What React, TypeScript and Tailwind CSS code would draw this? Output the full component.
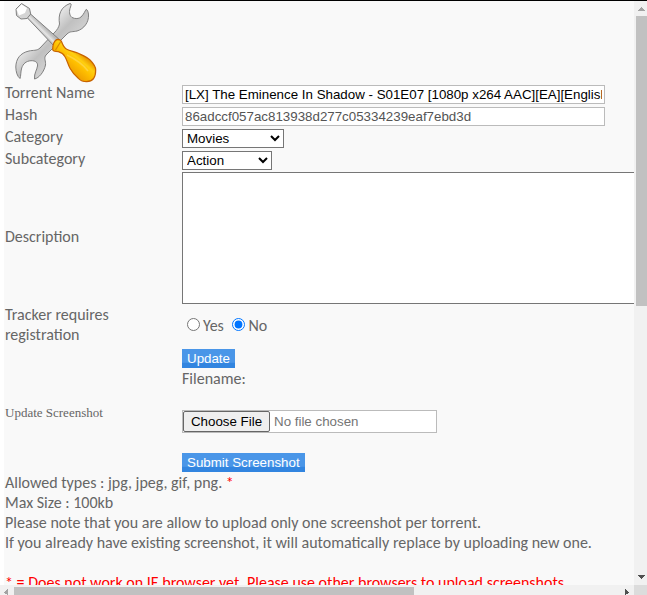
import type { ReactNode } from "react";

const control = "box-border border text-[13.333px] font-['Liberation_Sans',sans-serif] leading-[15px]";
const field = `${control} block h-[19px] w-[423px] rounded-none border-[#bbb] bg-white px-0.5 py-px`;
const select = `${control} block h-[19px] rounded-none border-[#767676] bg-white text-black`;
const button =
  "block h-[19px] bg-linear-to-b from-[#4a96e8] from-70% to-[#3285e0] to-75% px-[5px] font-['Liberation_Sans',sans-serif] text-[13.333px] leading-[19px] whitespace-nowrap text-white";

function Tools() {
  return (
    <svg width="82" height="82" viewBox="0 0 82 82" className="block">
      <defs>
        <linearGradient id="steel" x1="0" y1="0" x2="1" y2="1">
          <stop offset="0" stopColor="#fff" />
          <stop offset="0.35" stopColor="#e8e8e8" />
          <stop offset="0.5" stopColor="#c0c0c0" />
          <stop offset="0.7" stopColor="#d8d8d8" />
          <stop offset="1" stopColor="#eee" />
        </linearGradient>
        <linearGradient id="shaft" x1="24" y1="30" x2="29" y2="25" gradientUnits="userSpaceOnUse">
          <stop offset="0" stopColor="#b0b0b0" />
          <stop offset="0.5" stopColor="#e4e4e4" />
          <stop offset="1" stopColor="#bbb" />
        </linearGradient>
        <linearGradient id="handle" x1="54" y1="68" x2="67" y2="53" gradientUnits="userSpaceOnUse">
          <stop offset="0" stopColor="#f0a000" />
          <stop offset="0.5" stopColor="#ffc000" />
          <stop offset="0.75" stopColor="#ffcf10" />
          <stop offset="1" stopColor="#eca000" />
        </linearGradient>
      </defs>
      <path
        d="M55 1.5C46 5 43 12 44.5 22C44 25 42 28 40 30L25 46C22 49 18 48 14 49C5 51 1 57 0.8 65C1 70 2 74 5 76.5C6 74 5.500 70 6.700 66C8 62 11 59 16 58.700C21 58.500 23 61 22.500 64C22 68 19 71 19.500 77C24 76 29 70 30.500 63C31 59 28.500 56 31 53L52 32C55 29 58 30 62 29C69 27 74 20 73.500 13C73.500 10 72 7 71 7.500C70 9 69 12 66 15C64 17 60 17 57 15.500C54 13 54 9 55.500 5C56 3 57 2 55 1.500Z"
        fill="url(#steel)"
        stroke="#808080"
        strokeWidth="1"
      />
      <path d="M12 15.500L15.500 12L46 39L40 45Z" fill="url(#shaft)" stroke="#808080" strokeWidth="1" strokeLinejoin="round" />
      <path
        d="M1 7L6.500 1.500L14.500 6.500L15.700 12L12 16.500L6 17L1.500 13.500Z"
        fill="#d4d4d4"
        stroke="#808080"
        strokeWidth="1"
        strokeLinejoin="round"
      />
      <path d="M1.500 7.500L6.500 2.500L12 6L10 11L4 13.500Z" fill="#fff" />
      <path
        d="M42.300 37.300C45 37.300 46 38 46.700 40C48 43.500 49 46 51.700 47.300C55 49 59 49.500 63.300 51.300C68 53.500 72 55 75 58C78 61 80.700 64 80.700 68C80.700 73 79 79.700 71.700 79.700C68 79.700 65.500 78.500 63.300 76.300C59.500 73 57 70 55 66.300C53 62.500 52 58 50 54.700C48.500 52 46 50.500 43.300 49.700C41 49 38 50 37.700 47.500C37.400 44 39 38 42.300 37.300Z"
        fill="url(#handle)"
        stroke="#c86400"
        strokeWidth="1.2"
      />
      <path d="M52 53C60 57 68 62 73 69" stroke="#ffe070" strokeWidth="1.5" fill="none" opacity=".5" />
      <path d="M45.500 40L40.500 48" stroke="#d98900" strokeWidth="1.2" />
    </svg>
  );
}

function Row({ label, className, children }: { label: ReactNode; className: string; children: ReactNode }) {
  return (
    <div className={`flex ${className}`}>
      <div className="w-[177px] shrink-0 pt-px">{label}</div>
      <div className="shrink-0">{children}</div>
    </div>
  );
}

export default function App() {
  return (
    <div className="flex h-[595px] w-[647px] flex-col overflow-hidden border-t border-black bg-white font-['Carlito','Lato',sans-serif] text-base leading-5 text-[#666]">
      <div className="flex h-[584px]">
        <main className="ml-1 w-[630px] overflow-hidden bg-[#f9f9f9] pl-px">
          <div className="h-[81px] pt-px pl-2.5">
            <Tools />
          </div>
          <Row label="Torrent Name" className="h-[22px]">
            <input
              className={`${field} mt-[3px] text-black`}
              defaultValue="[LX] The Eminence In Shadow - S01E07 [1080p x264 AAC][EA][English Dub]"
            />
          </Row>
          <Row label="Hash" className="h-[22px]">
            <input disabled className={`${field} mt-[3px] text-[#545454]`} defaultValue="86adccf057ac813938d277c05334239eaf7ebd3d" />
          </Row>
          <Row label="Category" className="h-[22px]">
            <select className={`${select} mt-[3px] w-[102px]`}>
              <option>Movies</option>
            </select>
          </Row>
          <Row label="Subcategory" className="h-[22px]">
            <select className={`${select} mt-[3px] w-[90px]`}>
              <option>Action</option>
            </select>
          </Row>
          <Row label={<div className="pt-[56px]">Description</div>} className="h-[134px]">
            <textarea className="mt-0.5 block h-[132px] w-[500px] resize-none border border-[#767676] bg-white" />
          </Row>
          <Row
            className="h-[45px]"
            label={
              <>
                Tracker requires
                <br />
                registration
              </>
            }
          >
            <div className="flex pt-3 pl-[5px]">
              <input type="radio" name="reg" className="mt-0.5 mr-[3px] h-[13px] w-[13px]" />
              <span className="w-[29px]">Yes</span>
              <input type="radio" name="reg" defaultChecked className="mt-0.5 mr-[3.5px] h-[13px] w-[13px]" />
              <span>No</span>
            </div>
          </Row>
          <Row
            className="h-[124px]"
            label={<div className="pt-[53px] font-['Liberation_Serif',serif] text-[13px]">Update Screenshot</div>}
          >
            <button className={button}>Update</button>
            <div className="mt-px h-5">Filename:</div>
            <div className={`${control} mt-[21px] flex h-[23px] w-[255px] border-[#bbb] bg-white`}>
              <button className="h-[21px] w-[87px] rounded-[2px] border border-[#666] bg-[#efefef] text-black">Choose File</button>
              <span className="pt-[3px] pl-1 text-[#757575]">No file chosen</span>
            </div>
            <button className={`${button} mt-5`}>Submit Screenshot</button>
          </Row>
          <div className="whitespace-nowrap">
            <p>
              Allowed types : jpg, jpeg, gif, png. <span className="text-[red]">*</span>
            </p>
            <p>Max Size : 100kb</p>
            <p>Please note that you are allow to upload only one screenshot per torrent.</p>
            <p>If you already have existing screenshot, it will automatically replace by uploading new one.</p>
            <p className="mt-5 text-[red]">* = Does not work on IE browser yet. Please use other browsers to upload screenshots.</p>
          </div>
        </main>
        <aside className="flex w-[13px] flex-col justify-between bg-[#f1f1f1] pl-0.5">
          <div>
            <svg width="11" height="15" className="block" shapeRendering="crispEdges">
              <path d="M2 10L5.5 6L9 10Z" fill="#a3a3a3" />
            </svg>
            <div className="h-[290px] bg-[#c1c1c1]" />
          </div>
          <svg width="11" height="14" className="block" shapeRendering="crispEdges">
            <path d="M2 4H9L5.5 8Z" fill="#505050" />
          </svg>
        </aside>
      </div>
      <footer className="flex h-[10px]">
        <div className="flex w-[634px] bg-[#f1f1f1] pt-0.5">
          <svg width="14" height="8" shapeRendering="crispEdges">
            <path d="M8 2V8.5L4 5.5Z" fill="#a3a3a3" />
          </svg>
          <div className="h-2 w-[400px] bg-[#c1c1c1]" />
          <svg width="14" height="8" className="ml-auto" shapeRendering="crispEdges">
            <path d="M5 2V8.5L9 5.5Z" fill="#505050" />
          </svg>
        </div>
        <div className="w-[13px] bg-[#dcdcdc]" />
      </footer>
    </div>
  );
}
